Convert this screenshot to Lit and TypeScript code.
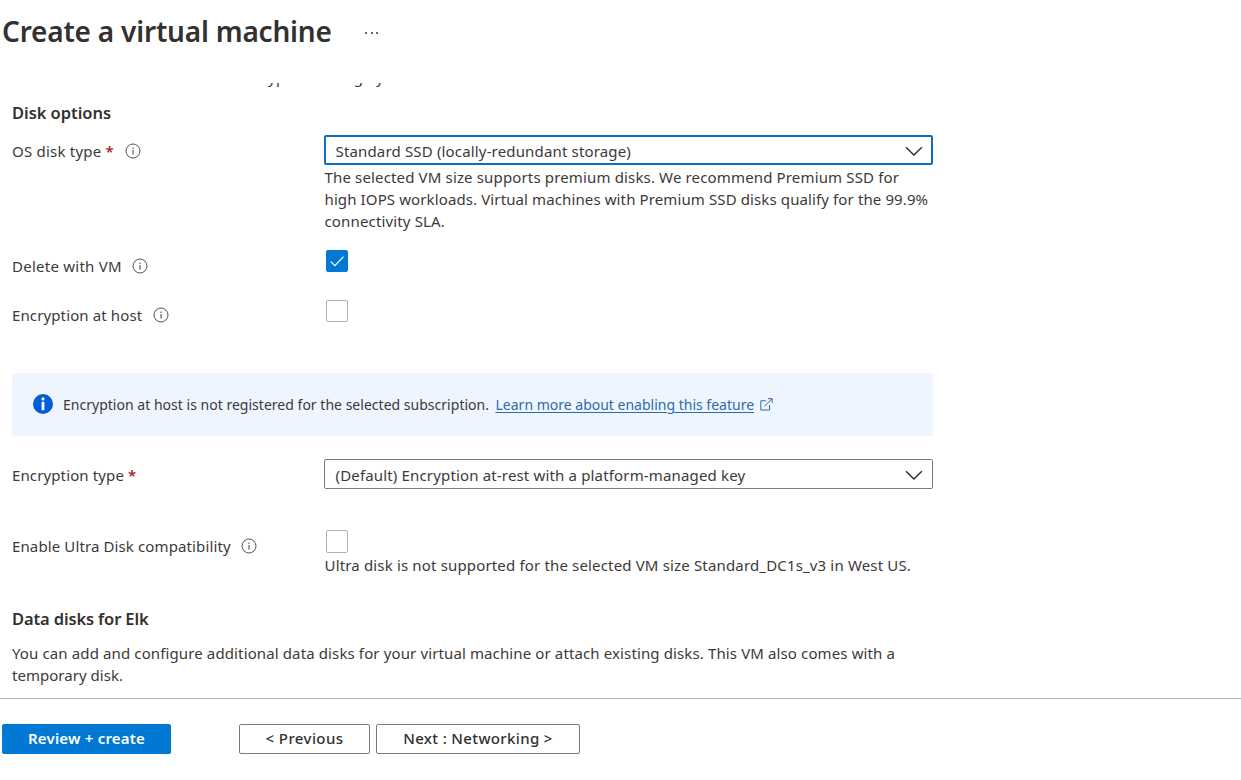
import { LitElement, html, css, svg, nothing } from "lit";
import { customElement, property } from "lit/decorators.js";

@customElement("info-icon")
class InfoIcon extends LitElement {
  static styles = css`
    :host { display: block; width: 16px; height: 16px; }
    svg { display: block; }
  `;
  render() {
    return html`<svg width="16" height="16" viewBox="0 0 16 16">
      <circle cx="8" cy="8" r="7" fill="none" stroke="#55534f" stroke-width="1" />
      <rect x="7.5" y="7" width="1.05" height="4.6" fill="#444" />
      <rect x="7.4" y="4.6" width="1.2" height="1.2" fill="#444" />
    </svg>`;
  }
}

@customElement("select-box")
class SelectBox extends LitElement {
  @property({ type: Boolean, reflect: true }) focused = false;
  static styles = css`
    :host {
      display: flex; box-sizing: border-box; height: 30px; width: 609px;
      align-items: center; justify-content: space-between;
      border: 1px solid #7b7a78; border-radius: 2px;
      padding: 0 9px 0 10.5px; background: #fff; line-height: 22px;
      letter-spacing: 0.16px;
    }
    :host([focused]) { border: 2px solid #106ebe; padding: 0 8px 0 9.5px; }
    .value { padding-top: 1px; }
    svg { display: block; margin-top: 1px; }
  `;
  render() {
    return html`<span class="value"><slot></slot></span>
      <svg width="18" height="12" viewBox="0 0 18 12">
        <path d="M1 2.2 L8.9 10 L16.8 2.2" fill="none" stroke="#2b2a29" stroke-width="1.4" />
      </svg>`;
  }
}

@customElement("check-box")
class CheckBox extends LitElement {
  @property({ type: Boolean, reflect: true }) checked = false;
  static styles = css`
    :host {
      display: block; box-sizing: border-box; width: 22px; height: 22px;
      margin-left: 2px; border: 1px solid #b3b0ad; border-radius: 2px; background: #fff;
    }
    :host([checked]) { background: #0078d4; border-color: #0078d4; }
    svg { display: block; }
  `;
  render() {
    return this.checked
      ? html`<svg width="20" height="20" viewBox="0 0 20 20">
          ${svg`<path d="M3.8 10.6 L7.9 14.6 L16.5 5.6" fill="none" stroke="#fff" stroke-width="1.2" />`}
        </svg>`
      : nothing;
  }
}

@customElement("app-root")
class AppRoot extends LitElement {
  static styles = css`
    :host {
      display: flex; flex-direction: column; box-sizing: border-box;
      width: 100%; height: 780px; overflow: hidden; background: #fff; color: #3b3a39;
      font: 400 15px/22px "Noto Sans", "Open Sans", sans-serif;
      white-space: nowrap;
    }
    header { display: flex; height: 83px; flex: none; padding: 12px 0 0 2px; box-sizing: border-box; }
    h1 { margin: 0; font-size: 28px; line-height: 38px; font-weight: 600; letter-spacing: -0.2px; color: #323130; }
    .more { display: flex; gap: 3.6px; padding: 20px 0 0 33.5px; }
    .more i { width: 2px; height: 2px; border-radius: 1px; background: #3b3a39; }
    main { height: 615px; flex: none; overflow: hidden; padding-left: 12px; }
    p { margin: 0; }
    .intro { margin-top: -17px; letter-spacing: 0.2px; }
    h2 { margin: 0; font-size: 16.5px; line-height: 22px; font-weight: 600; color: #323130; }
    .options { margin-top: 14px; letter-spacing: -0.05px; }
    .data { margin-top: 32px; letter-spacing: -0.137px; }
    .row { display: grid; grid-template-columns: 312px 609px; align-items: start; }
    .label { display: flex; padding-top: 5px; letter-spacing: 0.12px; }
    .label b { color: #a4262c; font-weight: 600; margin-left: 4px; }
    .label info-icon { margin: 3px 0 0 10.5px; }
    .os { margin-top: 11px; }
    .os .label { letter-spacing: 0.22px; }
    .os .label info-icon { margin-left: 11.5px; }
    .os .help { padding: 1px 0 0 0.5px; letter-spacing: 0.15px; }
    .os .help .tight { letter-spacing: 0.115px; }
    .delete { margin-top: 18px; }
    .delete .label { letter-spacing: 0.25px; }
    .host { margin-top: 23px; }
    .host .label { padding-top: 4px; }
    .banner {
      display: flex; align-items: center; box-sizing: border-box; width: 921px; height: 63px;
      margin-top: 47px; padding-left: 21px; background: #eff5ff; border-radius: 2px; font-size: 14px;
    }
    .banner .badge { margin: -1px 10px 0 0; }
    .banner a { color: #2b6cab; text-decoration: underline; text-underline-offset: 2px; text-decoration-thickness: 1px; margin-left: 6.5px; }
    .banner .note { letter-spacing: 0.018px; }
    .banner .ext { margin: -1px 0 0 5.5px; }
    .type { margin-top: 23px; }
    .ultra { margin-top: 41px; }
    .ultra check-box { height: 23px; }
    .ultra .help { padding: 1px 0 0 0.5px; letter-spacing: 0.16px; }
    .about { margin-top: 12px; letter-spacing: 0.123px; }
    .about .last { letter-spacing: 0.03px; }
    footer { display: flex; flex: 1; border-top: 1px solid #b5b3b1; padding: 25px 0 0 2px; }
    button {
      box-sizing: border-box; height: 30px; padding: 0 0 2px; border: 1px solid #7b7a78; border-radius: 2px;
      background: #fff; color: #323130; font: 500 15px/22px "Noto Sans", "Open Sans", sans-serif;
    }
    .primary { width: 169px; margin-right: 68px; background: #0078d4; border-color: #0078d4; color: #fff; font-weight: 600; letter-spacing: 0.2px; }
    .prev { width: 131px; margin-right: 6px; letter-spacing: 0.4px; }
    .next { width: 204px; letter-spacing: 0.35px; }
  `;

  render() {
    return html`
      <header>
        <h1>Create a virtual machine</h1>
        <div class="more"><i></i><i></i><i></i></div>
      </header>
      <main>
        <p class="intro">The size of the VM determines the type of storage you can use and the number of data disks allowed.</p>
        <h2 class="options">Disk options</h2>
        <div class="row os">
          <div class="label">OS disk type<b>*</b><info-icon></info-icon></div>
          <div>
            <select-box focused>Standard SSD (locally-redundant storage)</select-box>
            <p class="help">
              The selected VM size supports premium disks. We recommend Premium SSD for<br />
              <span class="tight">high IOPS workloads. Virtual machines with Premium SSD disks qualify for the 99.9%</span><br />
              connectivity SLA.
            </p>
          </div>
        </div>
        <div class="row delete">
          <div class="label">Delete with VM<info-icon></info-icon></div>
          <check-box checked></check-box>
        </div>
        <div class="row host">
          <div class="label">Encryption at host<info-icon></info-icon></div>
          <check-box></check-box>
        </div>
        <div class="banner">
          <svg class="badge" width="20" height="20" viewBox="0 0 20 20">
            <circle cx="10" cy="10" r="10" fill="#015cda" />
            <circle cx="10" cy="4.9" r="1.6" fill="#fff" />
            <rect x="8.6" y="7.8" width="2.8" height="8.4" fill="#fff" />
          </svg>
          <span class="note">Encryption at host is not registered for the selected subscription.</span>
          <a>Learn more about enabling this feature</a>
          <svg class="ext" width="13" height="13" viewBox="0 0 13 13" fill="none" stroke="#2b6cab">
            <path d="M6 2.8 H0.8 V12 H9.6 V7" />
            <path d="M4.4 8.4 L12 0.8 M8 0.7 H12.2 V4.9" />
          </svg>
        </div>
        <div class="row type">
          <div class="label">Encryption type<b>*</b></div>
          <select-box>(Default) Encryption at-rest with a platform-managed key</select-box>
        </div>
        <div class="row ultra">
          <div class="label">Enable Ultra Disk compatibility<info-icon></info-icon></div>
          <div>
            <check-box></check-box>
            <p class="help">Ultra disk is not supported for the selected VM size Standard_DC1s_v3 in West US.</p>
          </div>
        </div>
        <h2 class="data">Data disks for Elk</h2>
        <p class="about">
          You can add and configure additional data disks for your virtual machine or attach existing disks. This VM also comes with a<br />
          <span class="last">temporary disk.</span>
        </p>
      </main>
      <footer>
        <button class="primary">Review + create</button>
        <button class="prev">&lt; Previous</button>
        <button class="next">Next : Networking &gt;</button>
      </footer>
    `;
  }
}
